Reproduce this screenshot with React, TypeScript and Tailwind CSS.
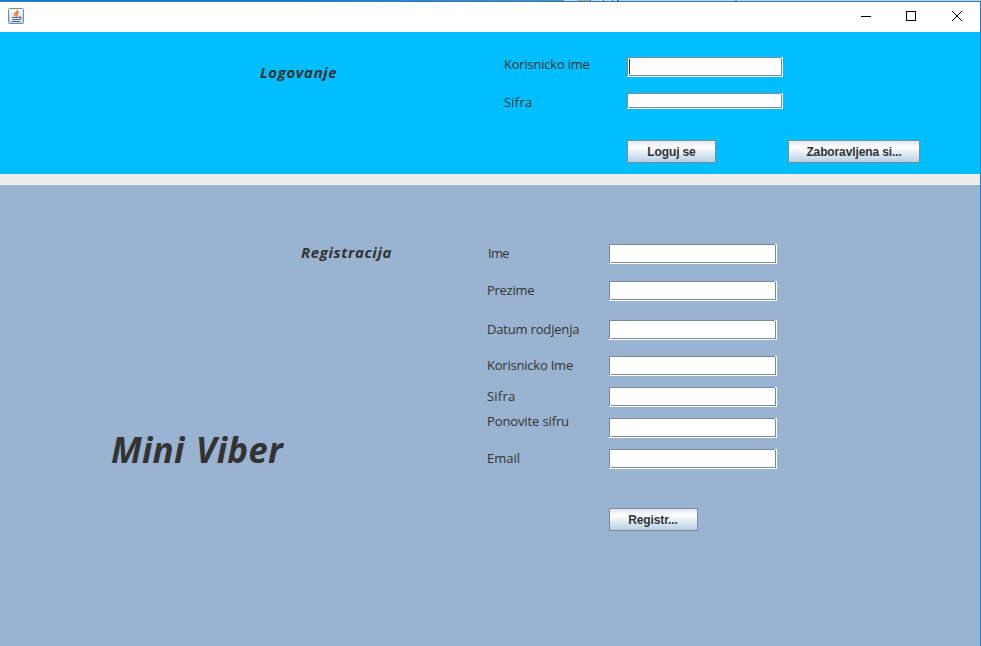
import React from "react";

const labelFont = "font-['Trebuchet_MS','Open_Sans',sans-serif] text-[#333333] whitespace-nowrap";

function Field({ size, focused = false }: { size: string; focused?: boolean }) {
  return (
    <div className={`relative shrink-0 border-r border-b border-white ${size}`}>
      <div className="flex h-full w-full border border-[#7a8a99] bg-white p-px">
        {focused && <div className="h-full w-px bg-[#333333]" />}
      </div>
      <div className="absolute top-0 right-0 h-px w-px bg-white" />
      <div className="absolute bottom-0 left-px h-px w-px bg-white" />
    </div>
  );
}

function Button({ label, size }: { label: string; size: string }) {
  return (
    <button
      className={`flex h-[23px] shrink-0 items-center justify-center whitespace-nowrap border border-[#7a8a99] bg-linear-to-b from-[#dde8f3] via-white via-30% to-[#b8cfe5] font-['Liberation_Sans',Arial,sans-serif] text-xs font-bold tracking-[-0.12px] text-[#333333] ${size}`}
    >
      {label}
    </button>
  );
}

const rows = [
  { label: "Ime", gap: "mt-[59px]", text: "-mt-px pl-px tracking-[-0.7px]" },
  { label: "Prezime", gap: "mt-[17px]", text: "-mt-px tracking-[-0.28px]" },
  { label: "Datum rodjenja", gap: "mt-[19px]", text: "-mt-px tracking-[-0.18px]" },
  { label: "Korisnicko Ime", gap: "mt-4", text: "-mt-px tracking-[-0.22px]" },
  { label: "Sifra", gap: "mt-[11px]", text: "-mt-px tracking-[0.2px]" },
  { label: "Ponovite sifru", gap: "mt-[11px]", text: "-mt-[7px] tracking-[-0.12px]" },
  { label: "Email", gap: "mt-[11px]", text: "-mt-px tracking-[0px]" },
];

function JavaIcon() {
  return (
    <svg width="16" height="16" viewBox="0 0 16 16" fill="none">
      <defs>
        <linearGradient id="tile" x1="0" y1="0" x2="0" y2="1">
          <stop offset="0" stopColor="#fbfcfd" />
          <stop offset="1" stopColor="#c3d2df" />
        </linearGradient>
      </defs>
      <rect x=".5" y=".5" width="15" height="15" rx="1" fill="url(#tile)" stroke="#6f8ca6" />
      <path d="M9.700 2C10 4 6.400 4.500 6.600 6.500C6.700 7.500 7.700 7.800 7.700 8.600M10.700 4.500C8.500 5.300 8.200 6 8.900 7C9.300 7.700 9 8.200 8.500 8.700" stroke="#ed792b" strokeWidth="1.400" />
      <path d="M4 9.500H11M5 11.500H10.500M3.500 13.500H12M11 9.200C14 8.300 13.500 11 11 11.500" stroke="#4c7391" strokeWidth="1.100" />
    </svg>
  );
}

export default function App() {
  return (
    <div className="flex h-[646px] w-[981px] flex-col overflow-hidden bg-[#ededed]">
      <div className="flex h-px shrink-0">
        <div className="w-[300px] bg-[#2874b8]" />
        <div className="w-[264px] bg-linear-to-r from-[#2874b8] to-[#6f8795]" />
        <div className="w-[13px] bg-[#d4d4d4]" />
        <div className="w-[13px] bg-[#c9a768]" />
        <div className="w-px bg-[#666666]" />
        <div className="w-3 bg-[#d4d4d4]" />
        <div className="w-px bg-[#777777]" />
        <div className="w-2 bg-[#d4d4d4]" />
        <div className="w-px bg-[#666666]" />
        <div className="w-1 bg-[#d4d4d4]" />
        <div className="w-0.5 bg-[#666666]" />
        <div className="w-[116px] bg-[#d0d0d0]" />
        <div className="w-0.5 bg-[#999999]" />
        <div className="flex-1 bg-[#cccccc]" />
      </div>
      <div className="flex min-h-0 flex-1 flex-col border-t border-r border-[#1982d8]">
        <header className="flex h-[30px] shrink-0 items-start justify-between bg-white pt-1.5 pl-2">
          <JavaIcon />
          <svg width="138" height="22" viewBox="0 0 138 22" fill="none" stroke="#000" shapeRendering="crispEdges">
            <path d="M19 8.500H29" />
            <rect x="64.500" y="3.500" width="9" height="9" />
            <path d="M110 3L120 13M120 3L110 13" shapeRendering="auto" />
          </svg>
        </header>

        <section className="flex h-[142px] shrink-0 bg-[#00bfff]">
          <h2 className={`${labelFont} mt-[30px] ml-[260px] w-[244px] text-[15px] leading-5 font-bold tracking-[0.6px] italic`}>
            Logovanje
          </h2>
          <div className={`${labelFont} w-[123px] text-[13px] leading-5`}>
            <div className="mt-[22px] tracking-[-0.22px]">Korisnicko ime</div>
            <div className="mt-[18px] tracking-[0.2px]">Sifra</div>
          </div>
          <div className="pt-[25px]">
            <Field size="h-5 w-[156px]" focused />
            <div className="mt-4">
              <Field size="h-4 w-[156px]" />
            </div>
            <div className="mt-[31px] flex gap-[72px]">
              <Button label="Loguj se" size="w-[89px]" />
              <Button label="Zaboravljena si..." size="w-[132px]" />
            </div>
          </div>
        </section>

        <div className="h-[11px] shrink-0 bg-[#ededed]" />

        <section className="flex min-h-0 flex-1 bg-[#99b3d0]">
          <div className="w-[487px] shrink-0">
            <h2 className={`${labelFont} mt-[57px] ml-[301px] text-[15px] leading-5 font-bold tracking-[0.62px] italic`}>
              Registracija
            </h2>
            <h1 className={`${labelFont} mt-[163px] ml-[111px] text-[35px] leading-[50px] font-bold tracking-[0.2px] italic [word-spacing:2px]`}>
              Mini Viber
            </h1>
          </div>
          <div>
            {rows.map((row) => (
              <div key={row.label} className={`flex h-5 ${row.gap}`}>
                <div className={`${labelFont} w-[122px] text-[13px] leading-5 ${row.text}`}>{row.label}</div>
                <Field size="h-5 w-[168px]" />
              </div>
            ))}
            <div className="mt-[39px] ml-[122px]">
              <Button label="Registr..." size="w-[89px] pr-px" />
            </div>
          </div>
        </section>
      </div>
    </div>
  );
}
